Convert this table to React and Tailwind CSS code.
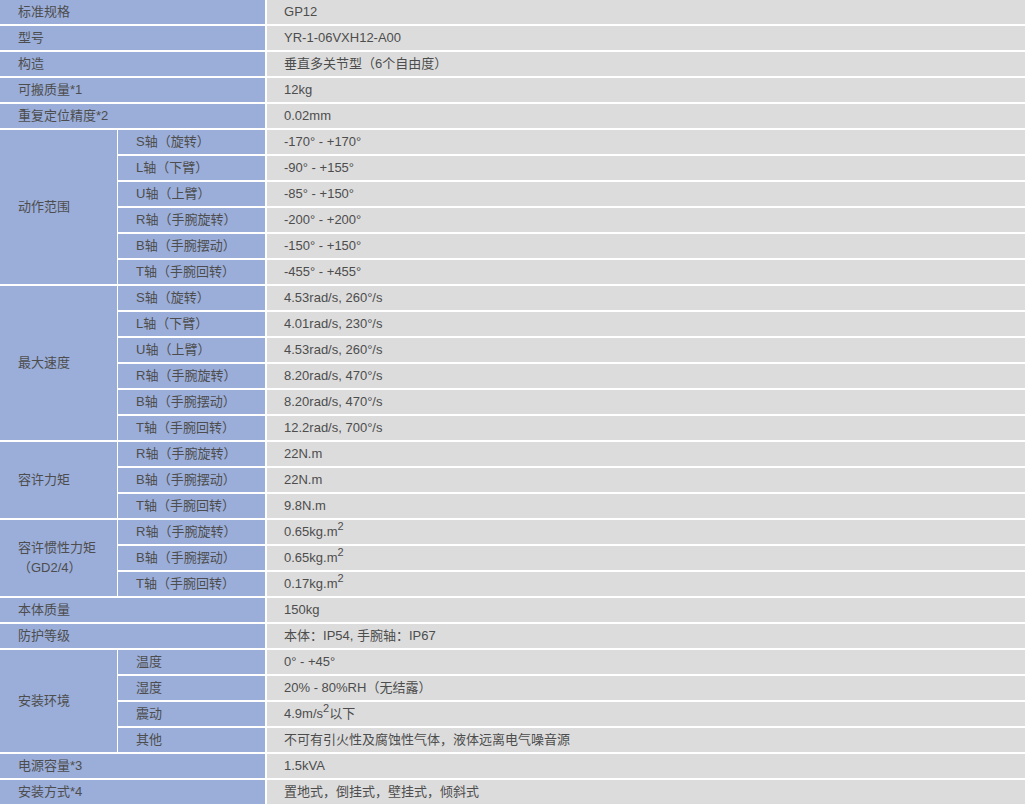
import React from 'react';

const font = { fontFamily: '"Liberation Sans", "Noto Sans CJK SC", sans-serif' };

const sq = <sup className="text-[11px] -top-[6px]">2</sup>;

const groups = [
  { label: '标准规格', value: 'GP12' },
  { label: '型号', value: 'YR-1-06VXH12-A00' },
  { label: '构造', value: '垂直多关节型（6个自由度）' },
  { label: '可搬质量*1', value: '12kg' },
  { label: '重复定位精度*2', value: '0.02mm' },
  {
    label: '动作范围',
    rows: [
      ['S轴（旋转）', '-170° - +170°'],
      ['L轴（下臂）', '-90° - +155°'],
      ['U轴（上臂）', '-85° - +150°'],
      ['R轴（手腕旋转）', '-200° - +200°'],
      ['B轴（手腕摆动）', '-150° - +150°'],
      ['T轴（手腕回转）', '-455° - +455°'],
    ],
  },
  {
    label: '最大速度',
    rows: [
      ['S轴（旋转）', '4.53rad/s, 260°/s'],
      ['L轴（下臂）', '4.01rad/s, 230°/s'],
      ['U轴（上臂）', '4.53rad/s, 260°/s'],
      ['R轴（手腕旋转）', '8.20rad/s, 470°/s'],
      ['B轴（手腕摆动）', '8.20rad/s, 470°/s'],
      ['T轴（手腕回转）', '12.2rad/s, 700°/s'],
    ],
  },
  {
    label: '容许力矩',
    rows: [
      ['R轴（手腕旋转）', '22N.m'],
      ['B轴（手腕摆动）', '22N.m'],
      ['T轴（手腕回转）', '9.8N.m'],
    ],
  },
  {
    label: (
      <>
        容许惯性力矩
        <br />
        （GD2/4）
      </>
    ),
    rows: [
      ['R轴（手腕旋转）', <>0.65kg.m{sq}</>],
      ['B轴（手腕摆动）', <>0.65kg.m{sq}</>],
      ['T轴（手腕回转）', <>0.17kg.m{sq}</>],
    ],
  },
  { label: '本体质量', value: '150kg' },
  { label: '防护等级', value: '本体：IP54, 手腕轴：IP67' },
  {
    label: '安装环境',
    rows: [
      ['温度', '0° - +45°'],
      ['湿度', '20% - 80%RH（无结露）'],
      ['震动', <>4.9m/s{sq}以下</>],
      ['其他', '不可有引火性及腐蚀性气体，液体远离电气噪音源'],
    ],
  },
  { label: '电源容量*3', value: '1.5kVA' },
  { label: '安装方式*4', value: '置地式，倒挂式，壁挂式，倾斜式' },
];

const labelCls = 'bg-[#9badd9] border-b-2 border-white pl-[18px] text-left align-middle leading-[20px]';
const subCls = 'bg-[#9badd9] border-b-2 border-l border-white pl-[18px] text-left align-middle';
const valueCls = 'bg-[#dcdcdc] border-b-2 border-l-2 border-white pl-[17px] text-left align-middle';

export default function App() {
  return (
    <div className="w-[1025px] h-[804px] overflow-hidden bg-white text-[13px] text-[#4d4d4d]" style={font}>
      <table className="w-[1025px] table-fixed border-separate border-spacing-0">
        <colgroup>
          <col className="w-[117px]" />
          <col className="w-[148px]" />
          <col />
        </colgroup>
        <tbody>
          {groups.map((g, gi) =>
            g.rows ? (
              g.rows.map((r, ri) => (
                <tr key={`${gi}-${ri}`} className="h-[26px]">
                  {ri === 0 && (
                    <td rowSpan={g.rows.length} className={labelCls}>
                      {g.label}
                    </td>
                  )}
                  <td className={subCls}>{r[0]}</td>
                  <td className={valueCls}>{r[1]}</td>
                </tr>
              ))
            ) : (
              <tr key={gi} className="h-[26px]">
                <td colSpan={2} className={labelCls}>
                  {g.label}
                </td>
                <td className={valueCls}>{g.value}</td>
              </tr>
            )
          )}
        </tbody>
      </table>
    </div>
  );
}
